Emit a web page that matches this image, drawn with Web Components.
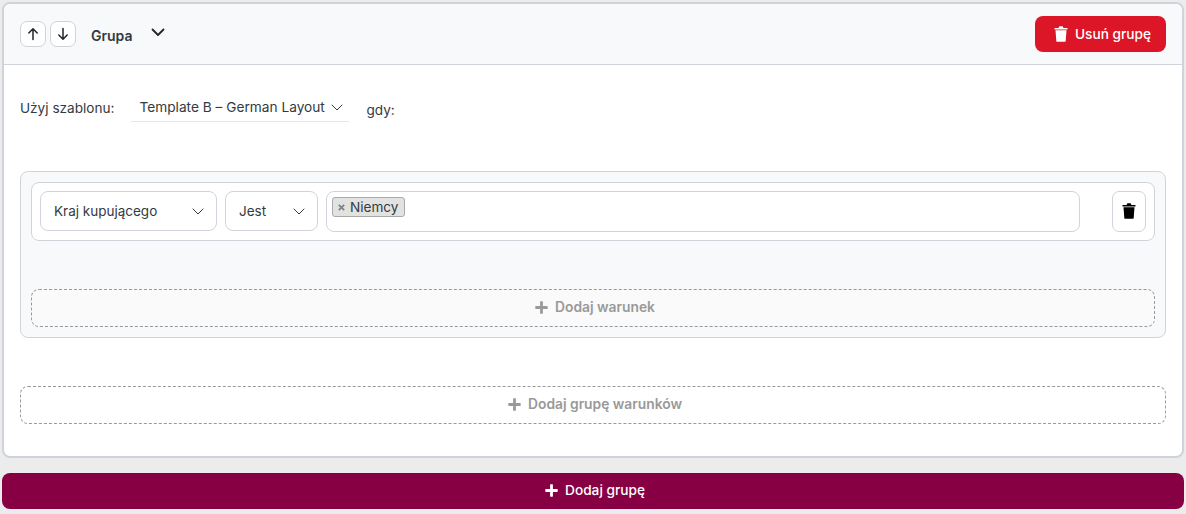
<!DOCTYPE html>
<html lang="pl">
<head>
<meta charset="utf-8">
<title>Grupa</title>
<style>
    html, body {
        margin: 0;
        padding: 0;
        height: 514px;
        overflow: hidden;
        background: #ececec;
        font-family: Inter, "Liberation Sans", sans-serif;
        color: #343a40;
    }
</style>
</head>
<body>
<group-page>
    <group-card>
        <condition-row slot="conditions"></condition-row>
    </group-card>
</group-page>

<script>
var icons = {
    up: `<svg width="14" height="14" viewBox="0 0 14 14" fill="none" stroke="currentColor" stroke-width="1.5" stroke-linecap="round" stroke-linejoin="round"><path d="M7 12.5V1.8M2.8 6 7 1.8 11.2 6"/></svg>`,
    down: `<svg width="14" height="14" viewBox="0 0 14 14" fill="none" stroke="currentColor" stroke-width="1.5" stroke-linecap="round" stroke-linejoin="round"><path d="M7 1.5v10.7M2.8 8 7 12.2 11.2 8"/></svg>`,
    chevron: `<svg width="14" height="9" viewBox="0 0 14 9" fill="none" stroke="currentColor" stroke-width="1.8" stroke-linecap="round" stroke-linejoin="round"><path d="M1.5 1.5 7 7l5.500-5.500"/></svg>`,
    caret: `<svg width="12" height="7" viewBox="0 0 12 7" fill="none" stroke="#343a40" stroke-width="1" stroke-linecap="round" stroke-linejoin="round"><path d="M1 1l5 5 5-5"/></svg>`,
    trash: `<svg width="14" height="16" viewBox="0 0 14 16" fill="currentColor"><path d="M4.800 1.300C5 .5 5.500.3 6 .3h2c.5 0 1 .2 1.200 1l.1.6h4.200v1.500H.5V1.900h4.200zM1.500 4.300h11l-.8 10.600c0 .5-.5.9-1 .9H3.300c-.5 0-1-.4-1-.9z"/></svg>`,
    plus: `<svg width="13" height="13" viewBox="0 0 13 13" fill="currentColor"><path d="M5.100.8c0-.3.2-.5.500-.5h1.800c.3 0 .5.2.5.500v4.300h4.300c.3 0 .5.2.5.500v1.800c0 .3-.2.500-.5.500H7.900v4.300c0 .3-.2.500-.5.500H5.600c-.3 0-.5-.2-.5-.5V7.900H.8c-.3 0-.5-.2-.5-.5V5.600c0-.3.2-.5.500-.5h4.300z"/></svg>`
}

class IconButton extends HTMLElement {
    constructor() {
        super()
        this.shadow = this.attachShadow({ mode: "open" })
        this.shadow.innerHTML = `
        <style>
            :host {
                display: flex;
                align-items: center;
                justify-content: center;
                box-sizing: border-box;
                width: 26px;
                height: 26px;
                background: #fff;
                border: 1px solid #ced4da;
                border-radius: 7px;
                color: #212529;
            }
            :host([big]) {
                width: 34px;
                height: 41px;
                padding-bottom: 1px;
                color: #000;
            }
            svg { display: block; }
        </style>
        ${icons[this.getAttribute("icon")]}
        `
    }
}

class SelectBox extends HTMLElement {
    constructor() {
        super()
        this.shadow = this.attachShadow({ mode: "open" })
        this.shadow.innerHTML = `
        <style>
            :host {
                display: flex;
                align-items: center;
                justify-content: space-between;
                box-sizing: border-box;
                height: 40px;
                padding: 0 12px 0 13px;
                background: #fff;
                border: 1px solid #ced4da;
                border-radius: 8px;
                font-size: 13.5px;
                color: #343a40;
            }
            svg { display: block; margin-top: 1px; }
        </style>
        <slot></slot>
        ${icons.caret}
        `
    }
}

class DashedButton extends HTMLElement {
    constructor() {
        super()
        this.shadow = this.attachShadow({ mode: "open" })
        this.shadow.innerHTML = `
        <style>
            :host {
                display: flex;
                align-items: center;
                justify-content: center;
                gap: 7px;
                box-sizing: border-box;
                height: 38px;
                padding: 0 0 2px 4px;
                border: 1px dashed #999;
                border-radius: 8px;
                background: #fafafa;
                color: #999;
                font-size: 13.8px;
                font-weight: 600;
            }
            :host([white]) { background: #fff; }
            svg { display: block; }
        </style>
        ${icons.plus}
        <slot></slot>
        `
    }
}

class ConditionRow extends HTMLElement {
    constructor() {
        super()
        this.shadow = this.attachShadow({ mode: "open" })
        this.shadow.innerHTML = `
        <style>
            :host {
                display: flex;
                align-items: flex-start;
                box-sizing: border-box;
                height: 59px;
                padding: 8px 8px 0 8px;
                background: #fff;
                border: 1px solid #ced4da;
                border-radius: 8px;
            }
            .country { width: 177px; margin-right: 8px; }
            .operator { width: 93px; margin-right: 8px; }
            .values {
                display: flex;
                align-items: flex-start;
                box-sizing: border-box;
                width: 754px;
                height: 41px;
                margin-right: 32px;
                padding: 5px;
                border: 1px solid #ced4da;
                border-radius: 8px;
            }
            .tag {
                display: inline-flex;
                align-items: center;
                box-sizing: border-box;
                height: 20px;
                padding: 0 5px 1px;
                gap: 4px;
                background: #e2e2e2;
                border: 1px solid #aaa;
                border-radius: 3px;
                font-size: 13.6px;
                color: #343a40;
            }
            .tag svg { display: block; margin-top: 1px; }
            .tag span { margin-left: 1px; }
        </style>
        <select-box class="country">Kraj kupującego</select-box>
        <select-box class="operator">Jest</select-box>
        <div class="values">
            <span class="tag">
                <svg width="7" height="7" viewBox="0 0 7 7" stroke="#808080" stroke-width="1.7"><path d="M.8.8l5.400 5.400M6.200.8.8 6.200"/></svg>
                <span>Niemcy</span>
            </span>
        </div>
        <icon-button big icon="trash"></icon-button>
        `
    }
}

class GroupCard extends HTMLElement {
    constructor() {
        super()
        this.shadow = this.attachShadow({ mode: "open" })
        this.shadow.innerHTML = `
        <style>
            :host {
                display: block;
                box-sizing: border-box;
                height: 456px;
                background: #fff;
                border: 2px solid #ced4da;
                border-radius: 8px;
                overflow: hidden;
                color: #343a40;
            }
            header {
                display: flex;
                align-items: center;
                box-sizing: border-box;
                height: 61px;
                padding: 0 16px;
                background: #f8f9fb;
                border-bottom: 1px solid #ced4da;
            }
            .moves { display: flex; gap: 4px; margin-right: 15px; }
            .title { font-size: 14px; font-weight: 600; margin-top: 2px; margin-right: 18px; }
            .toggle { display: block; margin-top: -4px; color: #212529; }
            .toggle svg { display: block; }
            .remove {
                display: flex;
                align-items: center;
                justify-content: center;
                gap: 7px;
                box-sizing: border-box;
                width: 131px;
                height: 36px;
                margin-left: auto;
                margin-top: -1px;
                padding-left: 4px;
                background: #dc1627;
                border-radius: 8px;
                color: #fff;
                font-size: 13.7px;
                font-weight: 500;
            }
            .remove svg { display: block; }
            .template {
                display: flex;
                align-items: flex-start;
                padding: 31px 16px 0;
                height: 75px;
                box-sizing: border-box;
                font-size: 13.6px;
            }
            .template .label { margin-top: 4px; margin-right: 17px; }
            .picker {
                display: flex;
                align-items: center;
                justify-content: space-between;
                box-sizing: border-box;
                width: 218px;
                height: 27px;
                padding: 0 6px 2px 9px;
                margin-right: 17px;
                margin-top: -1px;
                border-bottom: 1px solid #e4e7ea;
                font-size: 13.7px;
            }
            .picker span { margin-left: -1px; }
            .picker svg { display: block; }
            .when { margin-top: 6px; }
            .conditions {
                box-sizing: border-box;
                height: 167px;
                margin: 31px 16px 0;
                padding: 10px;
                background: #f8f9fb;
                border: 1px solid #ced4da;
                border-radius: 8px;
            }
            .conditions dashed-button { margin-top: 48px; }
            .add-conditions { margin: 48px 16px 0; }
        </style>
        <header>
            <div class="moves">
                <icon-button icon="up"></icon-button>
                <icon-button icon="down"></icon-button>
            </div>
            <span class="title">Grupa</span>
            <span class="toggle">${icons.chevron}</span>
            <div class="remove">${icons.trash}<span>Usuń grupę</span></div>
        </header>
        <div class="template">
            <span class="label">Użyj szablonu:</span>
            <div class="picker"><span>Template B – German Layout</span>${icons.caret}</div>
            <span class="when">gdy:</span>
        </div>
        <div class="conditions">
            <slot name="conditions"></slot>
            <dashed-button>Dodaj warunek</dashed-button>
        </div>
        <dashed-button class="add-conditions" white>Dodaj grupę warunków</dashed-button>
        `
    }
}

class GroupPage extends HTMLElement {
    constructor() {
        super()
        this.shadow = this.attachShadow({ mode: "open" })
        this.shadow.innerHTML = `
        <style>
            :host {
                display: block;
                padding: 2px;
            }
            .add-group {
                display: flex;
                align-items: center;
                justify-content: center;
                gap: 7px;
                box-sizing: border-box;
                height: 36px;
                margin-top: 15px;
                padding: 0 0 2px 4px;
                background: #880044;
                border-radius: 8px;
                color: #fff;
                font-size: 13.7px;
                font-weight: 500;
            }
            .add-group svg { display: block; }
        </style>
        <slot></slot>
        <div class="add-group">${icons.plus}<span>Dodaj grupę</span></div>
        `
    }
}

// children first, so their shadow roots exist when the parents render
window.customElements.define("icon-button", IconButton)
window.customElements.define("select-box", SelectBox)
window.customElements.define("dashed-button", DashedButton)
window.customElements.define("condition-row", ConditionRow)
window.customElements.define("group-card", GroupCard)
window.customElements.define("group-page", GroupPage)
</script>
</body>
</html>
